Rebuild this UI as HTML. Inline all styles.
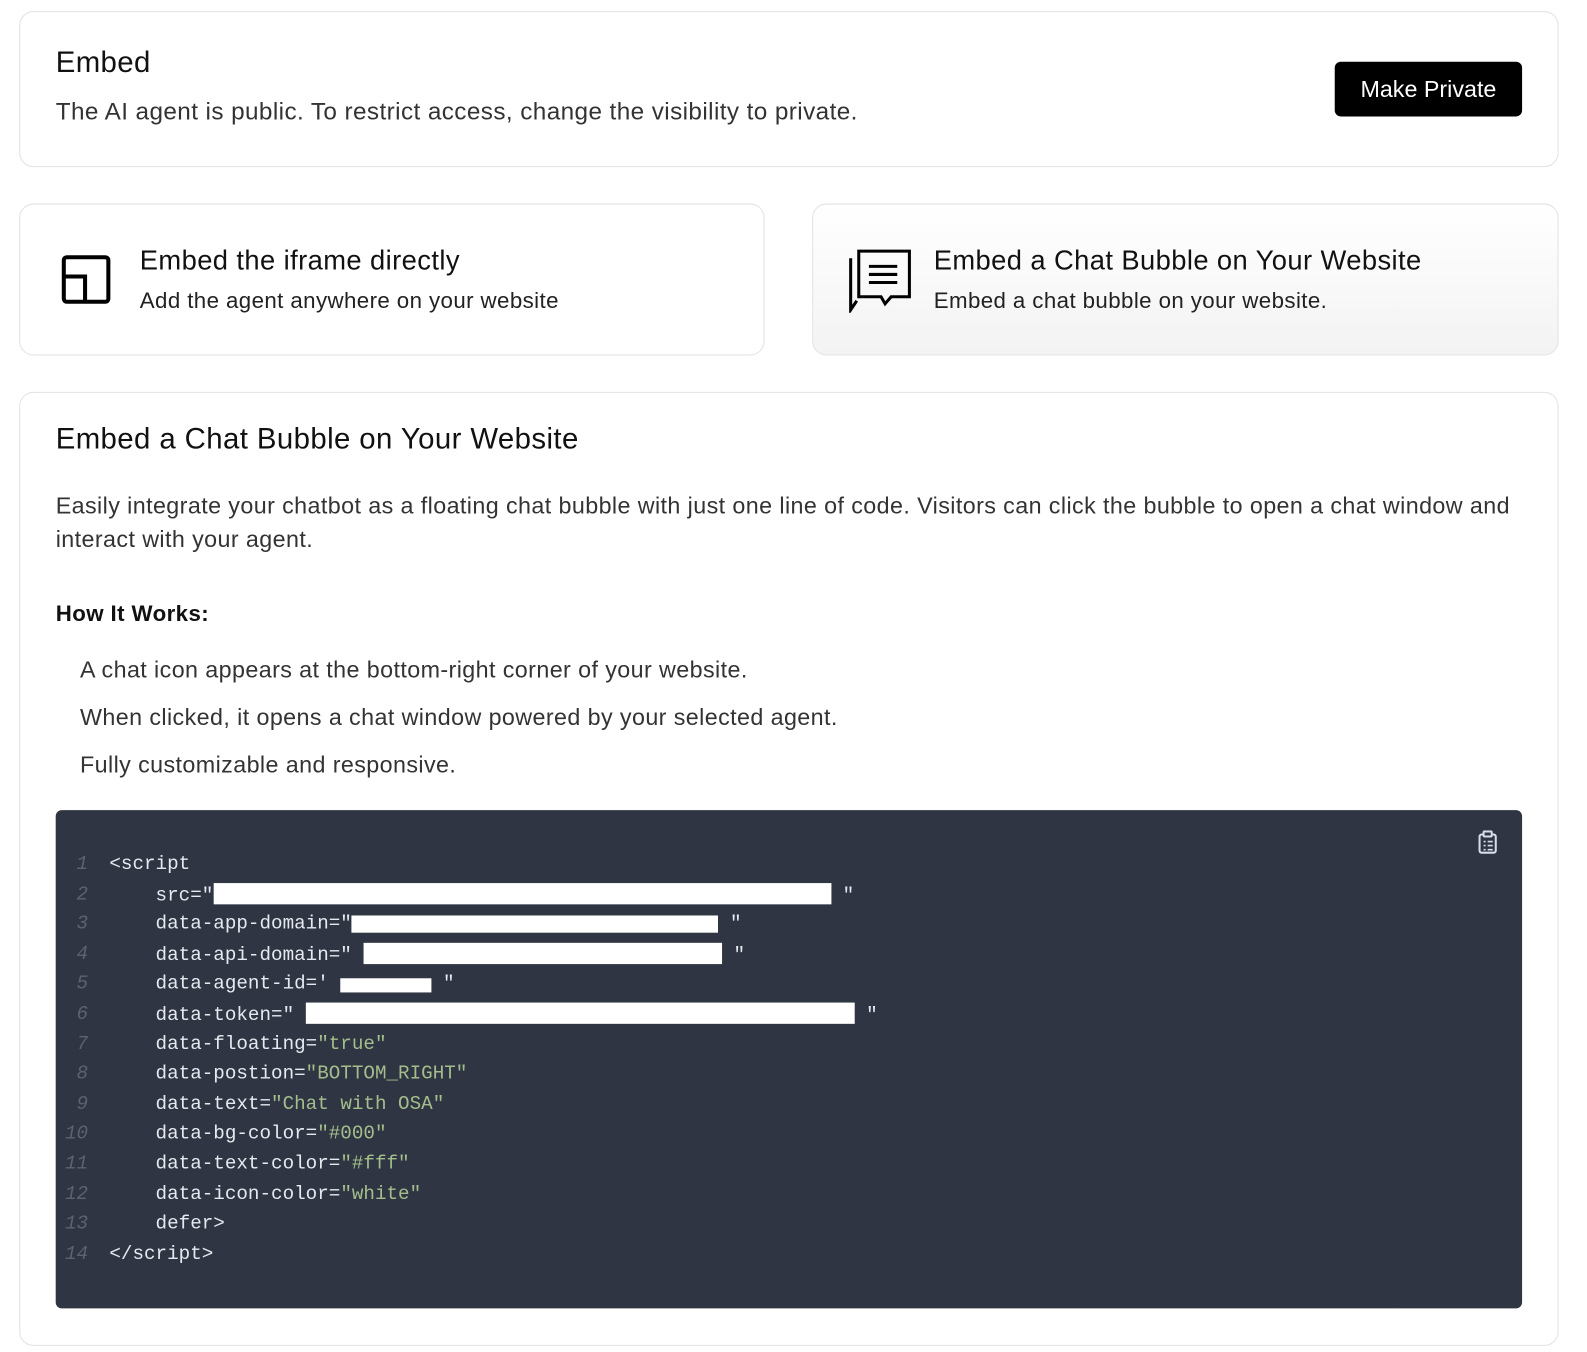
<!DOCTYPE html>
<html><head><meta charset="utf-8"><style>
*{box-sizing:border-box;margin:0;padding:0}
body{width:1587px;height:1352px;background:#fff;font-family:"Liberation Sans",sans-serif;color:#111;overflow:hidden}
#wrap{position:relative;width:1567px;height:1335px;transform:scale(1.0127);transform-origin:0 0}
.card{position:absolute;border:1px solid #e2e2e2;border-radius:14px;background:#fff}
.abs{position:absolute;white-space:nowrap}
.t{letter-spacing:0.4px}
.code{position:absolute;left:55px;top:800px;width:1448px;height:492px;background:#2f3542;border-radius:6px;font-family:"Liberation Mono",monospace;font-size:19px;color:#e5e9f0}
.ln{position:absolute;left:0;width:32px;text-align:right;color:#5c6370;font-style:italic}
.tx{position:absolute;left:53px;white-space:pre}
.s{color:#a3be8c}
.w{display:inline-block;background:#fff;height:21px;vertical-align:-4px}
</style></head><body><div id="wrap">
<div class="card" style="left:19px;top:11px;width:1520px;height:154px"></div>
<div class="abs t" style="left:55px;top:46px;font-size:29px">Embed</div>
<div class="abs t" style="left:55px;top:97px;font-size:24px;color:#333">The AI agent is public. To restrict access, change the visibility to private.</div>
<div class="abs" style="left:1318px;top:61px;width:185px;height:54px;background:#000;border-radius:6px;color:#fff;font-size:23px;text-align:center;line-height:54px">Make Private</div>

<div class="card" style="left:19px;top:201px;width:736px;height:150px"></div>
<svg class="abs" style="left:60px;top:251px" width="50" height="50" viewBox="0 0 50 50"><rect x="3" y="3" width="44" height="44" rx="3" fill="none" stroke="#000" stroke-width="4"/><path d="M3 22H24V47" fill="none" stroke="#000" stroke-width="4"/></svg>
<div class="abs t" style="left:138px;top:242px;font-size:27px;font-weight:500">Embed the iframe directly</div>
<div class="abs t" style="left:138px;top:284px;font-size:22px;color:#222">Add the agent anywhere on your website</div>

<div class="card" style="left:802px;top:201px;width:737px;height:150px;background:linear-gradient(#fff,#f3f3f3)"></div>
<svg class="abs" style="left:836px;top:245px" width="64" height="64" viewBox="0 0 64 64"><path d="M12 3H62V48H44L38 55L34 48H12Z" fill="none" stroke="#000" stroke-width="3"/><path d="M4 10V61L10 52" fill="none" stroke="#000" stroke-width="3"/><path d="M22 18H50M22 26H50M22 34H50" stroke="#000" stroke-width="3"/></svg>
<div class="abs t" style="left:922px;top:242px;font-size:27px">Embed a Chat Bubble on Your Website</div>
<div class="abs t" style="left:922px;top:284px;font-size:22px;color:#222">Embed a chat bubble on your website.</div>

<div class="card" style="left:19px;top:387px;width:1520px;height:942px"></div>
<div class="abs t" style="left:55px;top:418px;font-size:29px">Embed a Chat Bubble on Your Website</div>
<div class="abs t" style="left:55px;top:483px;font-size:23px;line-height:33px;color:#333;white-space:normal;width:1450px">Easily integrate your chatbot as a floating chat bubble with just one line of code. Visitors can click the bubble to open a chat window and interact with your agent.</div>
<div class="abs t" style="left:55px;top:593px;font-size:22px;font-weight:bold;color:#111">How It Works:</div>
<div class="abs t" style="left:79px;top:648px;font-size:23px;color:#333">A chat icon appears at the bottom-right corner of your website.</div>
<div class="abs t" style="left:79px;top:695px;font-size:23px;color:#333">When clicked, it opens a chat window powered by your selected agent.</div>
<div class="abs t" style="left:79px;top:742px;font-size:23px;color:#333">Fully customizable and responsive.</div>

<div class="code">
<svg style="position:absolute;left:1404px;top:20px" width="20" height="24" viewBox="0 0 20 24"><rect x="2" y="4" width="16" height="18" rx="2" fill="none" stroke="#d8dee9" stroke-width="2"/><rect x="6" y="1" width="8" height="5" rx="1" fill="#2f3542" stroke="#d8dee9" stroke-width="2"/><path d="M6 11h2M10 11h5M6 15h2M10 15h5M6 19h2M10 19h5" stroke="#d8dee9" stroke-width="1.6"/></svg>
<div class="ln" style="top:42px">1</div><div class="tx" style="top:42px">&lt;script</div>
<div class="ln" style="top:72px">2</div><div class="tx" style="top:72px">    src="<span class="w" style="width:610px"></span> "</div>
<div class="ln" style="top:101px">3</div><div class="tx" style="top:101px">    data-app-domain="<span class="w" style="width:362px;height:17px"></span> "</div>
<div class="ln" style="top:131px">4</div><div class="tx" style="top:131px">    data-api-domain=" <span class="w" style="width:354px"></span> "</div>
<div class="ln" style="top:160px">5</div><div class="tx" style="top:160px">    data-agent-id=' <span class="w" style="width:90px;height:14px"></span> "</div>
<div class="ln" style="top:190px">6</div><div class="tx" style="top:190px">    data-token=" <span class="w" style="width:542px"></span> "</div>
<div class="ln" style="top:220px">7</div><div class="tx" style="top:220px">    data-floating=<span class="s">"true"</span></div>
<div class="ln" style="top:249px">8</div><div class="tx" style="top:249px">    data-postion=<span class="s">"BOTTOM_RIGHT"</span></div>
<div class="ln" style="top:279px">9</div><div class="tx" style="top:279px">    data-text=<span class="s">"Chat with OSA"</span></div>
<div class="ln" style="top:308px">10</div><div class="tx" style="top:308px">    data-bg-color=<span class="s">"#000"</span></div>
<div class="ln" style="top:338px">11</div><div class="tx" style="top:338px">    data-text-color=<span class="s">"#fff"</span></div>
<div class="ln" style="top:368px">12</div><div class="tx" style="top:368px">    data-icon-color=<span class="s">"white"</span></div>
<div class="ln" style="top:397px">13</div><div class="tx" style="top:397px">    defer&gt;</div>
<div class="ln" style="top:427px">14</div><div class="tx" style="top:427px">&lt;/script&gt;</div>
</div>
</div></body></html>
